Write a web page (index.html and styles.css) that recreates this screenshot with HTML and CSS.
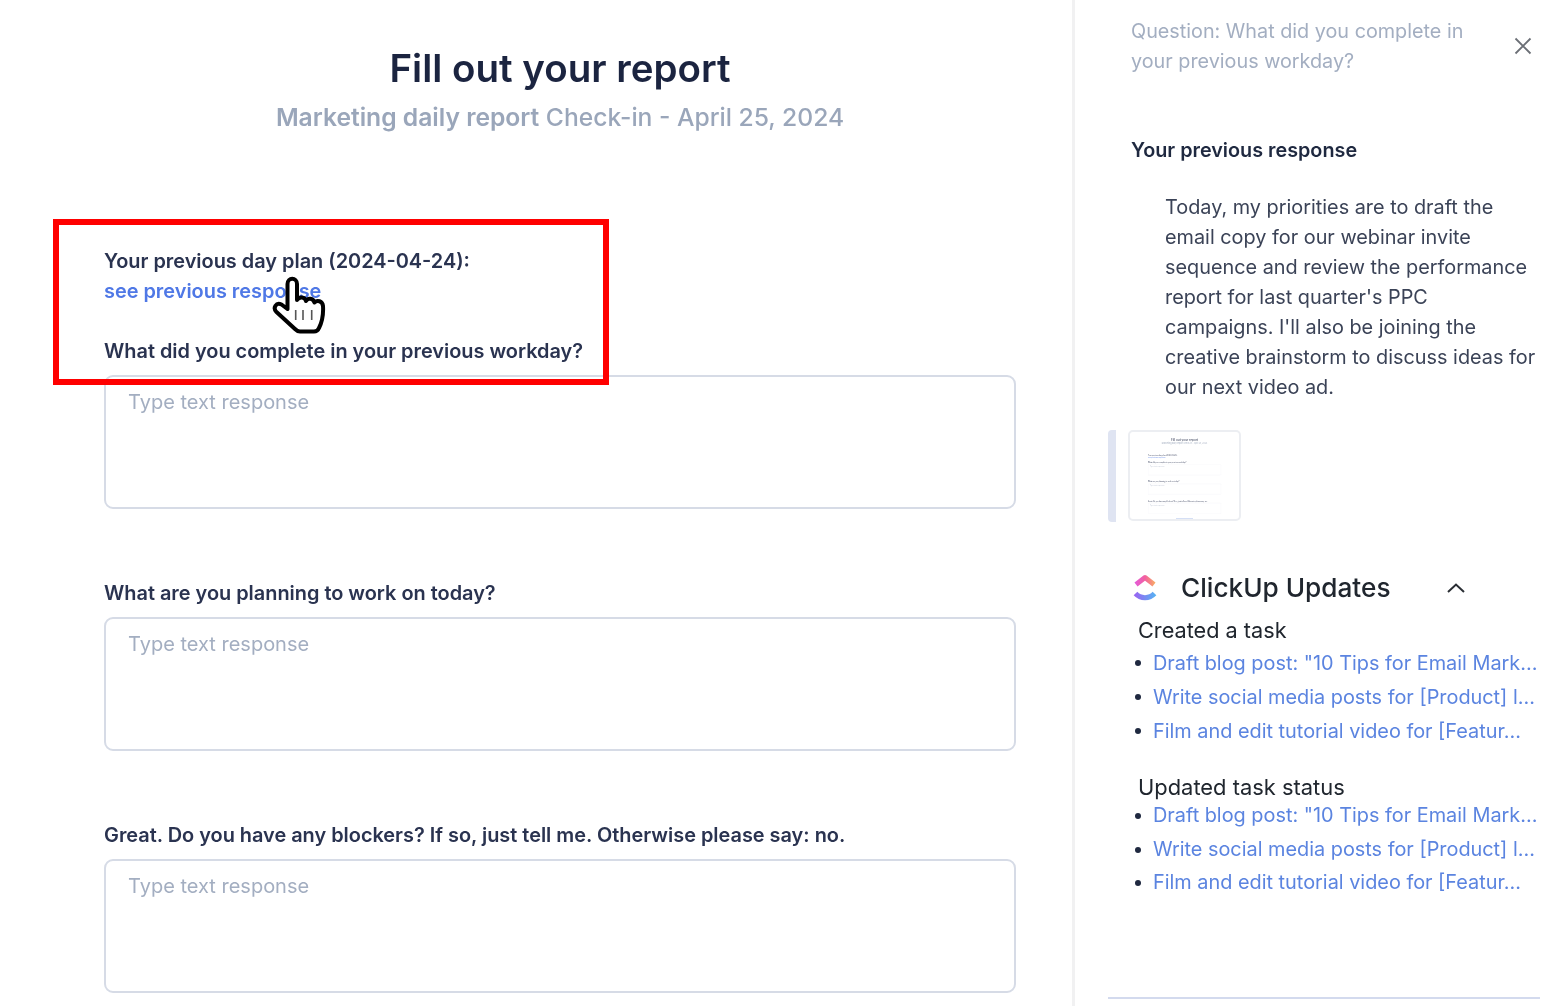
FILE: index.html
```html
<!DOCTYPE html>
<html lang="en">
<head>
<meta charset="utf-8">
<title>Fill out your report</title>
<link rel="stylesheet" href="styles.css">
</head>
<body>
<div class="page">
  <main class="main">
    <header class="head">
      <h1 class="title">Fill out your report</h1>
      <p class="subtitle"><span class="sub-strong">Marketing daily report</span> Check-in - April 25, 2024</p>
    </header>
    <div class="plan">
      <div class="label">Your previous day plan (2024-04-24):</div>
      <a class="see">see previous response</a>
    </div>
    <section class="field first">
      <div class="label">What did you complete in your previous workday?</div>
      <div class="box">Type text response</div>
    </section>
    <section class="field">
      <div class="label">What are you planning to work on today?</div>
      <div class="box">Type text response</div>
    </section>
    <section class="field">
      <div class="label">Great. Do you have any blockers? If so, just tell me. Otherwise please say: no.</div>
      <div class="box">Type text response</div>
    </section>
    <div class="redbox"></div>
    <svg class="hand" width="54" height="58" viewBox="0 0 54 58">
      <path d="M15.500 8C15.500 1 25 1 25 8V24C27 20.500 33 20.500 34 25C36 21.500 41 22 42.500 26.500C45 23.500 50.500 25 51 30C51.500 38 50 46 47 52C46 54.500 44.500 55.500 42 55.500H28C26 55.500 24.500 54.500 23 53L4.500 36C0.500 32 4 26 9.500 28.500L15.500 33Z" fill="#fff" stroke="#000" stroke-width="4" stroke-linejoin="round"/>
      <path d="M23.700 34V44M31 34V44M39.700 34V44" fill="none" stroke="#555" stroke-width="1.600"/>
    </svg>
  </main>
  <aside class="side">
    <div class="side-top">
      <p class="question">Question: What did you complete in your previous workday?</p>
      <svg class="close" width="20" height="20" viewBox="0 0 20 20"><path d="M2.500 2.500L17.500 17.500M17.500 2.500L2.500 17.500" fill="none" stroke="#6b6f76" stroke-width="1.800"/></svg>
    </div>
    <h2 class="prev-title">Your previous response</h2>
    <p class="prev-text">Today, my priorities are to draft the email copy for our webinar invite sequence and review the performance report for last quarter's PPC campaigns. I'll also be joining the creative brainstorm to discuss ideas for our next video ad.</p>
    <div class="attach">
      <div class="attach-bar"></div>
      <div class="thumb">
        <div class="mini">
          <header class="head">
            <div class="title">Fill out your report</div>
            <p class="subtitle"><span class="sub-strong">Marketing daily report</span> Check-in - April 25, 2024</p>
          </header>
          <div class="plan">
            <div class="label">Your previous day plan (2024-04-24):</div>
            <a class="see">see previous response</a>
          </div>
          <section class="field first">
            <div class="label">What did you complete in your previous workday?</div>
            <div class="box">Type text response</div>
          </section>
          <section class="field">
            <div class="label">What are you planning to work on today?</div>
            <div class="box">Type text response</div>
          </section>
          <section class="field">
            <div class="label">Great. Do you have any blockers? If so, just tell me. Otherwise please say: no.</div>
            <div class="box">Type text response</div>
          </section>
        </div>
        <div class="thumb-foot"></div>
      </div>
    </div>
    <div class="cu-head">
      <svg class="cu-logo" width="24" height="28" viewBox="0 0 24 28">
        <defs>
          <linearGradient id="cuTop" gradientUnits="userSpaceOnUse" x1="1" y1="0" x2="23" y2="0"><stop offset="0" stop-color="#e25adf"/><stop offset="0.5" stop-color="#f2609f"/><stop offset="1" stop-color="#f9b45e"/></linearGradient>
          <linearGradient id="cuBot" gradientUnits="userSpaceOnUse" x1="1" y1="0" x2="23" y2="0"><stop offset="0" stop-color="#9b62f2"/><stop offset="1" stop-color="#55b4f2"/></linearGradient>
        </defs>
        <path d="M3 10.500L12 3.500L21 10.500" fill="none" stroke="url(#cuTop)" stroke-width="5" stroke-linejoin="round"/>
        <path d="M2.500 19.500C7.500 25 16.500 25 21.500 19.500" fill="none" stroke="url(#cuBot)" stroke-width="5"/>
      </svg>
      <span class="cu-title">ClickUp Updates</span>
      <svg class="chev" width="20" height="12" viewBox="0 0 20 12"><path d="M2 10L10 2.500L18 10" fill="none" stroke="#2a2e34" stroke-width="2"/></svg>
    </div>
    <div class="group">
      <div class="group-title">Created a task</div>
      <ul class="tasks">
        <li>Draft blog post: "10 Tips for Email Mark...</li>
        <li>Write social media posts for [Product] l...</li>
        <li>Film and edit tutorial video for [Featur...</li>
      </ul>
    </div>
    <div class="group second">
      <div class="group-title">Updated task status</div>
      <ul class="tasks">
        <li>Draft blog post: "10 Tips for Email Mark...</li>
        <li>Write social media posts for [Product] l...</li>
        <li>Film and edit tutorial video for [Featur...</li>
      </ul>
    </div>
    <div class="side-rule"></div>
  </aside>
</div>
</body>
</html>
```

FILE: styles.css
```css
* { box-sizing: border-box; }
html, body { margin: 0; height: 100%; background: #fff; }
body { font-family: Inter, "Liberation Sans", sans-serif; overflow: hidden; color: #1f2940; }
.page { display: flex; width: 1564px; height: 1006px; filter: blur(0.4px); }

.main { position: relative; width: 1072px; flex: none; padding: 0 56px 0 104px; }
.head { text-align: center; padding-top: 42px; height: 246px; }
.title { margin: 0; font-size: 38.500px; line-height: 52px; font-weight: 600; color: #1b2440; }
.subtitle { margin: 0; font-size: 24.650px; line-height: 46px; font-weight: 500; color: #9aa6ba; white-space: nowrap; }
.sub-strong { font-weight: 600; }
.plan { display: flex; flex-direction: column; }
.label { font-size: 19.900px; line-height: 30px; font-weight: 600; color: #2a3350; white-space: nowrap; }
.see { font-size: 19.900px; line-height: 30px; font-weight: 600; color: #4f78e6; }
.field { margin-top: 69px; }
.field.first { margin-top: 30px; }
.field .label { height: 30px; margin-bottom: 9px; }
.box { height: 134px; border: 2px solid #d6dbe6; border-radius: 9px; padding: 10px 22px; font-size: 20px; line-height: 30px; color: #a3aec1; }
.redbox { position: absolute; left: 53px; top: 219px; width: 556px; height: 166px; border: 6px solid #f00; }
.hand { position: absolute; left: 272px; top: 276px; }

.side { position: relative; flex: 1; min-width: 0; border-left: 3px solid #f1f1f2; padding: 16px 0 0 56px; }
.side-top { display: flex; align-items: flex-start; justify-content: space-between; padding-right: 31px; }
.question { margin: 0; width: 350px; font-size: 19.800px; line-height: 30px; color: #a3aec1; }
.close { margin-top: 20px; }
.prev-title { margin: 59px 0 0; font-size: 19.800px; line-height: 30px; font-weight: 600; color: #1f2940; }
.prev-text { margin: 27px 24px 0 34px; font-size: 19.850px; line-height: 30px; color: #3b4357; }
.attach { display: flex; gap: 12px; margin: 28px 0 0 -23px; height: 92px; }
.attach-bar { width: 8px; height: 92px; background: #dfe4f2; border-radius: 4px 0 0 4px; }
.thumb { position: relative; width: 113px; height: 91px; border: 2px solid #eceef2; border-radius: 5px; overflow: hidden; }
.mini { width: 1400px; height: 1120px; padding: 30px 0 0 226px; opacity: 0.75; transform: scale(0.08); transform-origin: 0 0; }
.mini .head { width: 912px; }
.mini .field { width: 912px; }
.thumb-foot { position: absolute; left: 46px; bottom: 0; width: 17px; height: 1px; background: #d5dff5; }

.cu-head { display: flex; align-items: center; margin: 46px 0 0 2px; height: 40px; }
.cu-logo { flex: none; margin-right: 24px; }
.cu-title { width: 265px; font-size: 26.200px; line-height: 40px; font-weight: 500; color: #20262e; }
.chev { flex: none; }
.group { margin: 6px 0 0 7px; }
.group.second { margin-top: 23px; }
.group-title { font-size: 21.700px; line-height: 32px; color: #20262e; }
.second .group-title { font-size: 21.900px; margin-bottom: -4px; }
.tasks { list-style: none; margin: 0; padding: 0; }
.tasks li { position: relative; padding-left: 15px; font-size: 19.880px; line-height: 34px; color: #5b84e0; white-space: nowrap; }
.second .tasks li { line-height: 33.500px; }
.tasks li::before { content: ""; position: absolute; left: -3px; top: 14px; width: 6px; height: 6px; border-radius: 50%; background: #1f2940; }
.side-rule { position: absolute; left: 33px; top: 997px; width: 432px; height: 2px; background: #d3daee; }
```
